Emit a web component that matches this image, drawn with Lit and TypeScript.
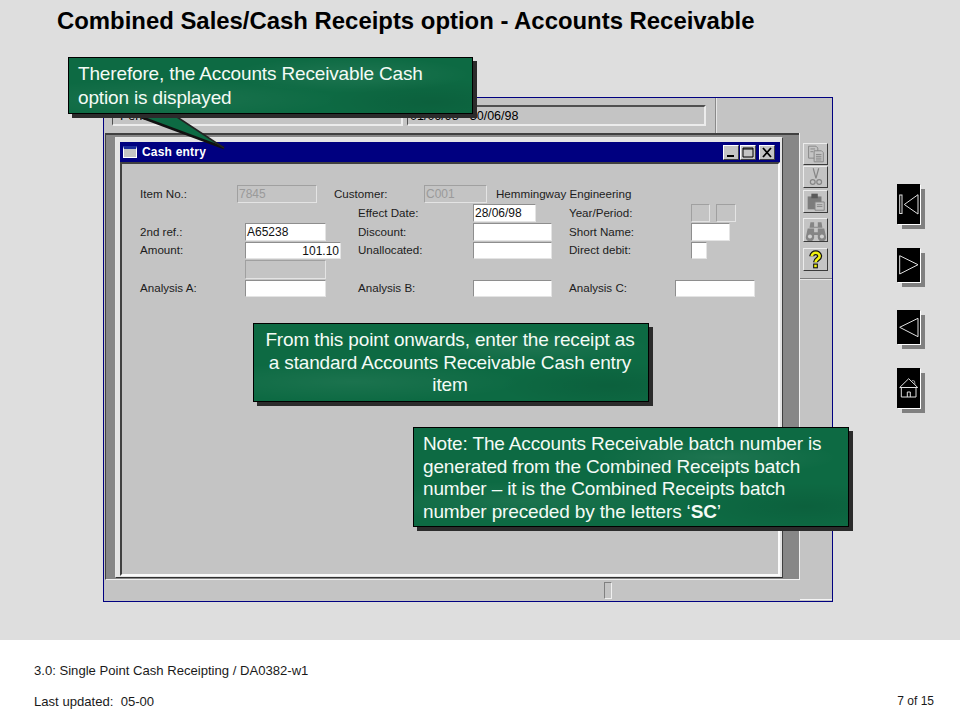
import { LitElement, html, css, svg } from "lit";
import { customElement } from "lit/decorators.js";

const COL = [140,237,245,317,326,334,341,358,424,473,487,496,536,552,569,675,691,707,710,716,730,736,755,790];
const colTemplate = COL.slice(1).map((x, i) => `${x - COL[i]}px`).join(" ");
const c = (a: number, b: number) => `grid-column:${COL.indexOf(a) + 1}/${COL.indexOf(b) + 1};`;

type Cell = { kind: "label" | "white" | "off" | "grey"; text?: string; r: number; a: number; b: number; right?: boolean };
const CELLS: Cell[] = [
  { kind: "label", text: "Item No.:", r: 1, a: 140, b: 237 },
  { kind: "off", text: "7845", r: 1, a: 237, b: 317 },
  { kind: "label", text: "Customer:", r: 1, a: 334, b: 424 },
  { kind: "off", text: "C001", r: 1, a: 424, b: 487 },
  { kind: "label", text: "Hemmingway Engineering", r: 1, a: 496, b: 755 },
  { kind: "label", text: "Effect Date:", r: 2, a: 358, b: 473 },
  { kind: "white", text: "28/06/98", r: 2, a: 473, b: 536 },
  { kind: "label", text: "Year/Period:", r: 2, a: 569, b: 691 },
  { kind: "off", r: 2, a: 691, b: 710 },
  { kind: "off", r: 2, a: 716, b: 736 },
  { kind: "label", text: "2nd ref.:", r: 3, a: 140, b: 245 },
  { kind: "white", text: "A65238", r: 3, a: 245, b: 326 },
  { kind: "label", text: "Discount:", r: 3, a: 358, b: 473 },
  { kind: "white", r: 3, a: 473, b: 552 },
  { kind: "label", text: "Short Name:", r: 3, a: 569, b: 691 },
  { kind: "white", r: 3, a: 691, b: 730 },
  { kind: "label", text: "Amount:", r: 4, a: 140, b: 245 },
  { kind: "white", text: "101.10", r: 4, a: 245, b: 341, right: true },
  { kind: "label", text: "Unallocated:", r: 4, a: 358, b: 473 },
  { kind: "white", r: 4, a: 473, b: 552 },
  { kind: "label", text: "Direct debit:", r: 4, a: 569, b: 691 },
  { kind: "white", r: 4, a: 691, b: 707 },
  { kind: "off", r: 5, a: 245, b: 326 },
  { kind: "label", text: "Analysis A:", r: 6, a: 140, b: 245 },
  { kind: "white", r: 6, a: 245, b: 326 },
  { kind: "label", text: "Analysis B:", r: 6, a: 358, b: 473 },
  { kind: "white", r: 6, a: 473, b: 552 },
  { kind: "label", text: "Analysis C:", r: 6, a: 569, b: 675 },
  { kind: "white", r: 6, a: 675, b: 755 },
];

const TOOL_ICONS = [
  svg`<g fill="#c4c4c4" stroke="#858585" stroke-width="1"><path d="M5 2h8l2 2v11H5z"/><path d="M11 7h8l2 2v10H11z"/><path d="M7 5h5M7 8h3M13 11h6M13 13h6M13 15h6M13 17h6" fill="none"/></g>`,
  svg`<g fill="none" stroke="#858585" stroke-width="1.300"><path d="M10 1l3 11M16 1l-3 11"/><circle cx="9.500" cy="16" r="2.600"/><circle cx="16.500" cy="16" r="2.600"/></g>`,
  svg`<g><path d="M4 5h15v14H4z" fill="#7c7c7c"/><path d="M8 2h7v5H8z" fill="#5a5a5a"/><path d="M12 11h10v9H12z" fill="#c4c4c4" stroke="#858585"/><path d="M14 14h6M14 16h6" stroke="#858585"/></g>`,
  svg`<g fill="#858585"><path d="M7 2h4v5h4V2h4l1 6H6z"/><path d="M4 9h7v4h4V9h7l2 9a4.500 4.500 0 0 1-9 1v-3h-4v3a4.500 4.500 0 0 1-9-1z"/><circle cx="6.500" cy="17.500" r="2.200" fill="#d0d0d0"/><circle cx="19.500" cy="17.500" r="2.200" fill="#d0d0d0"/></g>`,
  svg`<g fill="none"><path d="M8.500 7C8.500 2 17 2 17 7C17 10 12.500 10 12.500 13.500" stroke="#111" stroke-width="5.500"/><path d="M8.500 7C8.500 2 17 2 17 7C17 10 12.500 10 12.500 13.500" stroke="#f0f010" stroke-width="2.800"/><rect x="10.500" y="15.500" width="4" height="4" fill="#f0f010" stroke="#111" stroke-width="1.200"/></g>`,
];

const NAV = [
  { h: 40, d: svg`<rect x="2.700" y="11" width="2.300" height="18.500"/><path d="M7.300 20.500L21 10.700V30z"/>` },
  { h: 34, d: svg`<path d="M2.700 7.700V26L21 16.700z"/>` },
  { h: 34, d: svg`<path d="M2.700 17.300L21 8.300V26.700z"/>` },
  { h: 40, d: svg`<path d="M2.700 19.500L11.700 10.700L20.700 19.500z"/><path d="M4.300 19.500V29H19V19.500"/><path d="M10.300 29V24H13.300V29"/><path d="M15 12.500L17.500 13L18 16.500" stroke="#999"/>` },
];

@customElement("app-root")
export class AppRoot extends LitElement {
  static styles = css`
    :host { display: block; width: 960px; height: 720px; background: #fff; font-family: "Liberation Sans", Arial, sans-serif; color: #000; overflow: hidden; }
    .stage { position: relative; height: 640px; background: #dedede; box-sizing: border-box; }
    h1 { margin: 0; padding: 7px 0 0 57px; height: 97px; box-sizing: border-box; font-size: 23.900px; line-height: 28px; font-weight: 700; }
    .main { display: flex; align-items: flex-start; padding-left: 103px; }
    .panel { width: 730px; height: 505px; box-sizing: border-box; border: 1px solid #000080; background: #c4c4c4; display: flex; flex-direction: column; font-size: 12px; }
    .top { height: 35px; display: flex; align-items: flex-start; padding: 7px 0 0 8px; box-sizing: border-box; position: relative; }
    .tf { height: 21px; box-sizing: border-box; border-top: 2px solid #505050; border-left: 1px solid #505050; border-right: 2px solid #ececec; border-bottom: 2px solid #ececec; font-size: 12.500px; line-height: 18px; padding-left: 7px; white-space: pre; }
    .tf1 { width: 291px; }
    .tf2 { width: 299px; margin-left: 4px; padding-left: 2px; }
    .sep { width: 1px; height: 35px; margin: -7px 0 0 9px; background: #8a8a8a; box-shadow: 1px 0 0 #e6e6e6; }
    .body { height: 447px; display: flex; }
    .mdi { width: 694px; margin-left: 1px; box-sizing: border-box; background: #878787; border-top: 2px solid #404040; border-left: 1px solid #404040; border-bottom: 1px solid #f0f0f0; padding: 2px 16px 2px 9px; }
    .win { height: 441px; box-sizing: border-box; background: #e4e4e4; border: 1px solid; border-color: #e8e8e8 #404040 #303030 #e8e8e8; padding: 4px 2px 1px 4px; display: flex; flex-direction: column; }
    .titlebar { height: 20px; flex: none; background: #000080; display: flex; align-items: center; color: #fff; font-weight: 700; font-size: 12px; padding: 0 5px 0 3px; box-sizing: border-box; }
    .sysicon { width: 14px; height: 12px; background: #c4c4c4; border: 1px solid #fff; border-top: 3px solid #1a2a9a; box-sizing: border-box; margin-right: 5px; }
    .title-text { flex: 1; letter-spacing: .2px; }
    .wb { width: 16px; height: 15px; box-sizing: border-box; background: #c4c4c4; border: 1px solid; border-color: #fff #404040 #404040 #fff; margin-left: 1px; display: block; }
    .wb.x { margin-left: 3px; }
    .client { flex: 1; background: #c4c4c4; border: 2px solid; border-color: #404040 #fafafa #fafafa #404040; }
    .form { display: grid; grid-template-rows: 19px 19px 19px 18px 20px 18px; margin: 21px 0 0 18px; color: #111; }
    .lab { white-space: nowrap; display: flex; align-items: center; font-size: 11.600px; color: #1c1c1c; padding-bottom: 3px; }
    .fld { box-sizing: border-box; border: 1px solid; font-size: 12px; display: flex; align-items: center; padding: 0 1px; overflow: hidden; }
    .white { background: #fff; border-color: #8e8e8e #e4e4e4 #e4e4e4 #8e8e8e; margin-bottom: 1px; color: #111; }
    .off { background: #c4c4c4; border-color: #a0a0a0 #e4e4e4 #e4e4e4 #a0a0a0; margin-bottom: 1px; color: #9a9a9a; }
    .right { justify-content: flex-end; padding-right: 1px; }
    .tools { flex: 1; border-left: 1px solid #f0f0f0; display: flex; flex-direction: column; align-items: flex-start; padding: 10px 0 0 3px; box-sizing: border-box; }
    .tb { width: 25px; height: 22px; box-sizing: border-box; background: #c4c4c4; border: 1px solid; border-color: #ececec #3a3a3a #3a3a3a #ececec; margin-bottom: 1px; padding: 0; display: block; }
    .tb svg { display: block; width: 23px; height: 100%; }
    .tb.t2 { margin-top: 1px; height: 23px; }
    .tb.t3 { margin-top: 4px; height: 24px; }
    .tb.t4 { margin-top: 5px; height: 23px; }
    .tools hr { align-self: stretch; margin: 6px 0 0 -3px; border: 0; height: 2px; background: linear-gradient(#7c7c7c 50%, #e6e6e6 50%); }
    .status { flex: 1; display: flex; position: relative; padding: 2px 0 0 500px; box-sizing: border-box; }
    .grip { width: 8px; height: 17px; box-sizing: border-box; border: 1px solid; border-color: #808080 #f0f0f0 #f0f0f0 #808080; }
    .corner { position: absolute; right: 0; bottom: 1px; width: 32px; height: 1px; background: #f4f4f4; }
    .nav { margin-left: 64px; padding-top: 87px; display: flex; flex-direction: column; }
    .nb { width: 23px; box-sizing: border-box; background: #000; box-shadow: 1px 1px 0 #fff, 5px 5px 0 #808080; display: block; }
    .nb + .nb { margin-top: 24px; }
    .nb.wide { margin-top: 28px !important; }
    .nb svg { display: block; width: 23px; height: 100%; fill: none; stroke: #e0e0e0; stroke-width: 1; }
    .call { position: absolute; box-sizing: border-box; border: 1px solid #000; color: #f4fbf6; box-shadow: 4px 4px 0 #2b2b2b; font-size: 19px; line-height: 22.500px; letter-spacing: -.15px;
      background:
        radial-gradient(ellipse 120px 18px at 70% 30%, rgba(255,255,255,.07), transparent),
        radial-gradient(ellipse 170px 20px at 25% 75%, rgba(255,255,255,.06), transparent),
        radial-gradient(ellipse 110px 24px at 90% 80%, rgba(0,0,0,.09), transparent),
        #0d6a43; }
    .c1 { left: 68px; top: 57px; width: 405px; height: 57px; padding: 4px 0 0 9px; line-height: 23.500px; }
    .c2 { left: 253px; top: 323px; width: 396px; height: 79px; padding: 5px 2px 0 0; text-align: center; }
    .c3 { left: 413px; top: 427px; width: 436px; height: 100px; padding: 5px 0 0 9px; }
    .tail { position: absolute; left: 125px; top: 110px; width: 105px; height: 42px; overflow: visible; }
    footer { position: relative; height: 80px; font-size: 13.100px; color: #1a1a1a; padding: 23px 0 0 34px; box-sizing: border-box; }
    footer div + div { margin-top: 16px; }
    footer span { position: absolute; right: 26px; bottom: 12px; font-size: 12px; }
    .bold { font-weight: 700; }
  `;

  render() {
    return html`
      <div class="stage">
        <h1>Combined Sales/Cash Receipts option - Accounts Receivable</h1>
        <div class="main">
          <div class="panel">
            <div class="top">
              <div class="tf tf1">Period</div>
              <div class="tf tf2">01/06/98 - 30/06/98</div>
              <div class="sep"></div>
            </div>
            <div class="body">
              <div class="mdi">
                <div class="win">
                  <div class="titlebar">
                    <span class="sysicon"></span>
                    <span class="title-text">Cash entry</span>
                    <svg class="wb" viewBox="0 0 14 13"><rect x="3" y="9" width="7" height="2" fill="#000"/></svg>
                    <svg class="wb" viewBox="0 0 14 13"><path d="M2 2h10v9H2z M2 3h10" fill="none" stroke="#000"/></svg>
                    <svg class="wb x" viewBox="0 0 14 13"><path d="M3 2l8 9M11 2l-8 9" stroke="#000" stroke-width="1.800"/></svg>
                  </div>
                  <div class="client">
                    <div class="form" style="grid-template-columns:${colTemplate}">
                      ${CELLS.map((f) => html`<div class="${f.kind === "label" ? "lab" : `fld ${f.kind}${f.right ? " right" : ""}`}" style="grid-row:${f.r};${c(f.a, f.b)}">${f.text ?? ""}</div>`)}
                    </div>
                  </div>
                </div>
              </div>
              <div class="tools">
                ${TOOL_ICONS.map((ic, i) => html`<button class="tb t${i}"><svg viewBox="0 0 25 21">${ic}</svg></button>`)}
                <hr />
              </div>
            </div>
            <div class="status"><div class="grip"></div><div class="corner"></div></div>
          </div>
          <div class="nav">
            ${NAV.map((n, i) => html`<div class="nb ${i === 2 ? "wide" : ""}" style="height:${n.h}px"><svg viewBox="0 0 23 ${n.h}">${n.d}</svg></div>`)}
          </div>
        </div>
        <svg class="tail" viewBox="0 0 105 42"><path d="M5 3L99 38L52 7z" fill="#0d6a43"/><path d="M5 3L99 38" stroke="#111" stroke-width="2.500" fill="none"/><path d="M52 7L99 38" stroke="#222" stroke-width="1.500" fill="none"/></svg>
        <div class="call c1">Therefore, the Accounts Receivable Cash<br />option is displayed</div>
        <div class="call c2">From this point onwards, enter the receipt as<br />a standard Accounts Receivable Cash entry<br />item</div>
        <div class="call c3">Note: The Accounts Receivable batch number is<br />generated from the Combined Receipts batch<br />number – it is the Combined Receipts batch<br />number preceded by the letters ‘<span class="bold">SC</span>’</div>
      </div>
      <footer>
        <div>3.0: Single Point Cash Receipting / DA0382-w1</div>
        <div>Last updated:&nbsp; 05-00</div>
        <span>7 of 15</span>
      </footer>
    `;
  }
}
